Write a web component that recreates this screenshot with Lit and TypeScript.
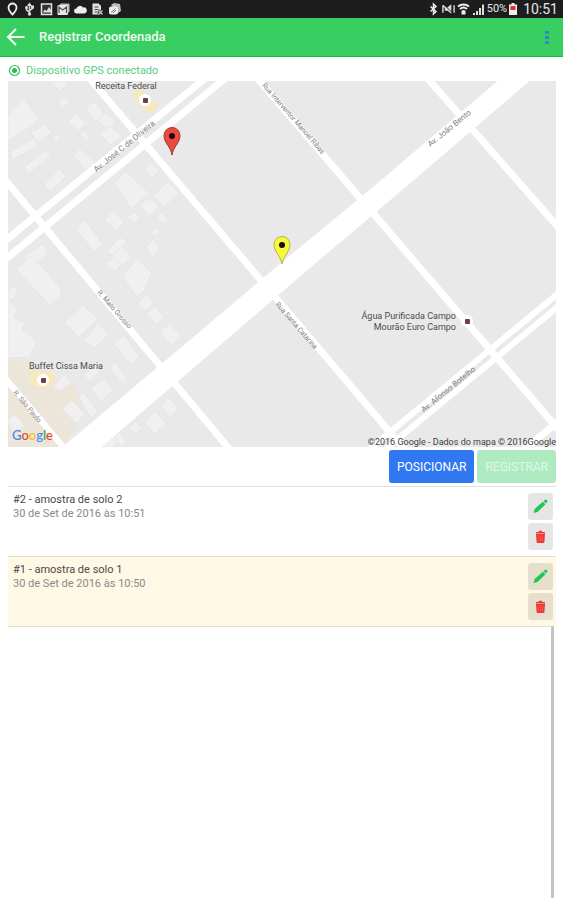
import { LitElement, html, css, svg } from "lit";
import { customElement, property } from "lit/decorators.js";

interface Sample {
  id: number;
  name: string;
  date: string;
  selected: boolean;
}

const samples: Sample[] = [
  { id: 2, name: "amostra de solo 2", date: "30 de Set de 2016 às 10:51", selected: false },
  { id: 1, name: "amostra de solo 1", date: "30 de Set de 2016 às 10:50", selected: true },
];

@customElement("status-bar")
class StatusBar extends LitElement {
  static styles = css`
    :host {
      display: flex;
      justify-content: space-between;
      align-items: center;
      height: 18px;
      padding: 0 5px 0 6px;
      background: #1d1d1d;
      color: #e6e6e6;
      font-family: Roboto, sans-serif;
    }
    .group {
      display: flex;
      align-items: center;
      gap: 3px;
    }
    .left {
      gap: 4px;
    }
    svg {
      display: block;
      width: 13px;
      height: 14px;
    }
    .right {
      gap: 2px;
    }
    .battery {
      width: 8px;
    }
    .percent {
      font-size: 11px;
      line-height: 18px;
    }
    .clock {
      font-size: 14px;
      line-height: 18px;
      margin-left: 4px;
    }
  `;
  render() {
    return html`
      <div class="group left">
        <svg viewBox="0 0 13 14"><path d="M6.500 1.500a4 4 0 0 0-4 4c0 3 4 7 4 7s4-4 4-7a4 4 0 0 0-4-4z" fill="none" stroke="#eee" stroke-width="1.800" /></svg>
        <svg viewBox="0 0 13 14"><path d="M6.500 2v11M6.500 10L3.500 8V5.500M6.500 8.500l3-2V4" fill="none" stroke="#ccc" stroke-width="1.600" /><path d="M4 4l2.500-3.500L9 4z" fill="#ddd" /><circle cx="6.500" cy="12" r="1.700" fill="#ddd" /><circle cx="3.500" cy="5.500" r="1.500" fill="#ddd" /><rect x="8" y="3.500" width="3" height="3" fill="#ddd" /></svg>
        <svg viewBox="0 0 13 14"><rect x="1.500" y="2" width="10" height="10.500" fill="#333" stroke="#e4e4e4" stroke-width="1.500" /><path d="M2.500 10.500l2.500-3 1.500 1.500 2.500-4 2 3v2.500z" fill="#ddd" /></svg>
        <svg viewBox="0 0 13 14"><rect x="3" y="1.500" width="9.500" height="9" rx="1" fill="#bbb" /><rect x="0.500" y="3" width="10.500" height="10" rx="1" fill="#e8e8e8" /><path d="M2 11V5l3.700 3L9.500 5v6" fill="none" stroke="#555" stroke-width="1.300" /></svg>
        <svg viewBox="0 0 13 14"><path d="M2.500 11.500a2.500 2.500 0 0 1 0-5A3.600 3.600 0 0 1 9 5.500a3 3 0 0 1 1.500 6z" fill="#eee" /></svg>
        <svg viewBox="0 0 13 14"><path d="M1.500 1.500h6L10 4v8.500H1.500z" fill="#e4e4e4" /><path d="M3.500 5h4M3.500 7.500h4M3.500 10h3" stroke="#444" /><path d="M7.500 8.500l4 4M11.500 8.500l-4 4" fill="none" stroke="#1d1d1d" stroke-width="3" /><path d="M7.500 8.500l4 4M11.500 8.500l-4 4" fill="none" stroke="#ccc" stroke-width="1.300" /></svg>
        <svg viewBox="0 0 13 14"><path d="M3 3l3-2 6 1 1 7-3 2z" fill="#bdbdbd" /><rect x="1" y="4.500" width="9" height="8" rx="2" fill="#eee" /><path d="M3 10.500l4.500-4M5 11l3-3" stroke="#777" /></svg>
      </div>
      <div class="group right">
        <svg viewBox="0 0 13 14"><path d="M3.500 4.500l5.500 5L6.500 12V2L9 4.500l-5.500 5" fill="none" stroke="#eee" stroke-width="1.500" /></svg>
        <svg viewBox="1 0 14 14"><path d="M2 11V3M2 3l3 3" fill="none" stroke="#ddd" stroke-width="1.500" /><path d="M4 5h3l4-3v10L7 9H4z" fill="#ddd" /><path d="M14 3v8" stroke="#ddd" stroke-width="1.500" /><path d="M3 2l9 9" stroke="#1d1d1d" /></svg>
        <svg viewBox="0 0 13 14"><path d="M1 4.500a8.500 8.500 0 0 1 11 0M3 7a5.500 5.500 0 0 1 7 0" fill="none" stroke="#eee" stroke-width="2" /><path d="M4.500 9a3 3 0 0 1 4 0v3.500h-4z" fill="#eee" /></svg>
        <svg viewBox="0 0 13 14"><path d="M1 13v-2h2v2zM4 13V9h2v4zM7 13V6h2v7zM10 13V2.500h2V13z" fill="#ddd" /></svg>
        <span class="percent">50%</span>
        <svg class="battery" viewBox="0 0 8 14"><path d="M2.500 1h3v1.500H8V13H0V2.500h2.500z" fill="#eee" /><path d="M1.500 4h5v4h-5z" fill="#d33" /></svg>
        <span class="clock">10:51</span>
      </div>
    `;
  }
}

const road = (d: string, w = 7) => svg`<path class="road" d=${d} stroke-width=${w} />`;

const pin = (x: number, y: number, fill: string, stroke: string) => svg`
  <g transform="translate(${x} ${y})">
    <path d="M0 0C-1-8-8-12-8-19.500a8 8 0 0 1 16 0C8-12 1-8 0 0z" fill=${fill} stroke=${stroke} />
    <circle cy="-19" r="3" fill="#1a0c0c" />
  </g>`;

const poi = (x: number, y: number) => svg`
  <circle cx=${x} cy=${y} r="6" fill="#fff" />
  <rect x=${x - 2} y=${y - 2} width="5" height="5" rx="1" fill="#6b4343" />`;

const buildings = [
  "8 115 24 99 38 117 34 125 8 141",
  "50 81 60 91 68 84 66 81",
  "58 103 63 96 70 101 64 108",
  "10 152 33 138 39 146 12 160",
  "31 133 44 124 52 132 38 143",
  "24 167 47 149 51 156 29 174",
  "44 184 59 169 66 176 50 192",
  "53 138 57 133 61 137 56 143",
  "73 155 80 148 97 164 86 171",
  "68 122 76 113 86 123 78 131",
  "85 108 94 101 104 113 96 122",
  "97 120 106 112 116 123 107 130",
  "100 134 110 126 122 137 111 145",
  "79 134 86 130 89 138 86 142",
  "114 183 126 171 149 193 131 209",
  "144 169 151 162 159 171 152 178",
  "152 196 168 182 179 193 165 207",
  "140 205 149 198 159 206 149 217",
  "104 219 113 211 124 222 116 231",
  "127 217 134 212 140 217 134 223",
  "157 218 161 212 168 219 163 224",
  "76 229 85 220 103 244 94 252",
  "150 233 155 227 160 232 155 236",
  "146 247 153 239 159 248 152 258",
  "106 252 121 237 127 242 113 255",
  "109 260 122 247 132 257 118 269",
  "23 256 43 244 48 253 32 268",
  "16 269 30 256 42 266 61 289 61 296 50 306",
  "105 263 115 258 122 265 115 271",
  "122 277 137 259 152 272 144 291 137 297",
  "137 303 147 294 154 304 146 311",
  "146 314 155 306 164 317 157 325",
  "160 333 169 323 181 336 171 345",
  "64 323 83 305 98 319 79 337",
  "84 340 98 323 109 335 94 348",
  "8 290 16 285 18 294 10 301 18 309 14 318 25 323 22 330 37 341 30 357 8 358",
  "114 344 124 335 139 356 132 364 127 360",
  "110 369 115 361 127 378 122 383",
  "84 376 96 364 100 371 90 382",
  "90 388 104 379 114 390 101 402",
  "79 398 83 392 98 412 91 418",
  "62 409 72 400 85 414 77 424",
  "53 387 64 374 71 383 60 391",
  "128 427 136 421 142 429 135 434",
  "144 424 155 411 166 423 155 434",
  "161 406 169 397 178 409 170 417",
  "98 447 112 434 121 440 113 447",
  "113 434 118 430 127 442 121 447",
  "8 420 15 414 25 427 12 432",
];

@customElement("location-map")
class LocationMap extends LitElement {
  static styles = css`
    :host {
      display: block;
      font-family: Roboto, sans-serif;
    }
    svg {
      display: block;
      width: 100%;
      height: auto;
    }
    .land {
      fill: #e9e9e9;
    }
    .building {
      fill: #f0f0f0;
      stroke: #e6e6e6;
    }
    .area {
      fill: #ece6da;
    }
    .spot {
      fill: #f8e8bd;
    }
    .road {
      fill: none;
      stroke: #fff;
    }
    .avenue {
      fill: #fff;
    }
    .street {
      font-size: 7px;
      fill: #808080;
      text-anchor: middle;
    }
    .major {
      font-size: 8px;
    }
    .place {
      font-size: 9px;
      fill: #4c4c4c;
    }
    .centre {
      text-anchor: middle;
    }
    .end {
      text-anchor: end;
    }
    .credit {
      font-size: 9px;
      fill: #404040;
      text-anchor: end;
    }
    .logo {
      font-family: Lato, sans-serif;
      font-size: 13px;
      font-weight: 500;
    }
    .b { fill: #4285f4; }
    .r { fill: #ea4335; }
    .y { fill: #fbbc05; }
    .g { fill: #34a853; }
  `;
  street(x: number, y: number, angle: number, label: string, major = false) {
    return svg`<text class=${major ? "street major" : "street"} transform="translate(${x} ${y}) rotate(${angle})" y="3">${label}</text>`;
  }
  render() {
    return html`
      <svg viewBox="8 81 548 366" role="img" aria-label="Mapa">
        <rect class="land" x="8" y="81" width="548" height="366" />
        <polygon class="area" points="8,360 32,362 50,376 60,384 75,385 84,414 72,434 63,447 8,447" />
        ${buildings.map((p) => svg`<polygon class="building" points=${p} />`)}
        <polygon class="spot" points="28,378 34,371 52,371 56,380 46,388 34,387" />
        <polygon class="spot" points="131,94 140,89 159,106 149,114" />
        ${road("M0 245L213 72M0 264L240 66", 7)}
        ${road("M2 176L236 457", 7)}
        ${road("M85 73L411 457", 7)}
        ${road("M252 72L565 437", 7)}
        ${road("M422 72L566 236", 7)}
        ${road("M360 457L566 287M376 457L566 300", 6)}
        ${road("M524 450L566 415", 7)}
        ${road("M0 372L70 455", 6)}
        <polygon class="avenue" points="60,449 190,340 275,268 373,187 500,79 532,79 381,208 318,261 190,371 99,449" />
        ${this.street(124, 146, -39, "Av. José C de Oliveira", true)}
        ${this.street(294, 118, 49, "Rua Interventor Manoel Ribas")}
        ${this.street(449, 128, -39, "Av. João Bento", true)}
        ${this.street(115, 309, 49, "R. Mato Grosso")}
        ${this.street(297, 325, 49, "Rua Santa Catarina")}
        ${this.street(448, 389, -39, "Av. Afonso Botelho", true)}
        ${this.street(28, 406, 50, "R. São Paulo")}
        ${poi(145, 100)} ${poi(43, 380)} ${poi(467, 321)}
        <text class="place centre" x="126" y="89">Receita Federal</text>
        <text class="place centre" x="66" y="369">Buffet Cissa Maria</text>
        <text class="place end" x="456" y="319">Água Purificada Campo</text>
        <text class="place end" x="456" y="330">Mourão Euro Campo</text>
        ${pin(172, 155, "#ea4a3e", "#a8342c")}
        ${pin(282, 264, "#f8f83e", "#b4b43c")}
        <text class="logo" x="12" y="440"><tspan class="b">G</tspan><tspan class="r">o</tspan><tspan class="y">o</tspan><tspan class="b">g</tspan><tspan class="g">l</tspan><tspan class="r">e</tspan></text>
        <text class="credit" x="556" y="445">©2016 Google - Dados do mapa © 2016Google</text>
      </svg>
    `;
  }
}

@customElement("sample-row")
class SampleRow extends LitElement {
  @property({ attribute: false }) sample!: Sample;
  static styles = css`
    :host {
      display: block;
      font-family: Roboto, sans-serif;
    }
    .row {
      display: flex;
      justify-content: space-between;
      box-sizing: border-box;
      min-height: 70px;
      padding: 6px 3px 5px 5px;
      border-top: 1px solid #dfdfdf;
      background: #fff;
    }
    .selected {
      background: #fef8e5;
      border-color: #e4dfcc;
    }
    .name,
    .date {
      margin: 0;
      font-size: 11px;
      line-height: 14px;
      font-weight: 400;
      color: #4a4a4a;
    }
    .date {
      color: #8a8a8a;
    }
    .actions {
      display: flex;
      flex-direction: column;
      gap: 3px;
    }
    button {
      display: flex;
      align-items: center;
      justify-content: center;
      width: 25px;
      height: 27px;
      padding: 0;
      border: 0;
      border-radius: 3px;
      background: #e6e6e6;
    }
    .selected button {
      background: #e5dfce;
    }
    svg {
      display: block;
      width: 15px;
      height: 15px;
    }
  `;
  render() {
    const s = this.sample;
    return html`
      <div class="row ${s.selected ? "selected" : ""}">
        <div>
          <h2 class="name">#${s.id} - ${s.name}</h2>
          <p class="date">${s.date}</p>
        </div>
        <div class="actions">
          <button aria-label="Editar">
            <svg viewBox="0 0 15 15"><path d="M0.500 14l1.200-4L9.800 2.800l2.700 2.500L4.500 13zM10.500 2.200l1.500-1.400q.8-.6 1.600.1l.6.600q.6.800-.1 1.500l-1.300 1.500z" fill="#20c556" /></svg>
          </button>
          <button aria-label="Excluir">
            <svg viewBox="0 0 15 15"><path d="M3 3h2.500q.3-1.500 2-1.500t2 1.500H12v1.500H3z" fill="#ee3a36" /><path d="M3 5h9l-.6 8q-.1 1-1 1H4.600q-.9 0-1-1z" fill="#ee3a36" /><path d="M5.700 6.500v5.500M7.500 6.500v5.500M9.300 6.500v5.500" stroke="#f4736c" stroke-width="0.500" /></svg>
          </button>
        </div>
      </div>
    `;
  }
}

@customElement("app-root")
class AppRoot extends LitElement {
  static styles = css`
    :host {
      display: flex;
      flex-direction: column;
      min-height: 100vh;
      background: #fff;
      font-family: Roboto, sans-serif;
    }
    header {
      display: flex;
      align-items: center;
      box-sizing: border-box;
      height: 39px;
      padding: 0 8px 0 6px;
      border-bottom: 1px solid #14bd4b;
      background: #38ce62;
    }
    h1 {
      flex: 1;
      margin: 0 0 0 14px;
      font-size: 13px;
      line-height: 18px;
      font-weight: 500;
      color: #effbf2;
    }
    .icon {
      padding: 0;
      border: 0;
      background: none;
    }
    .icon svg {
      display: block;
    }
    main {
      display: flex;
      flex: 1;
      flex-direction: column;
      padding: 0 7px 2px 8px;
    }
    .gps {
      display: flex;
      align-items: center;
      gap: 5px;
      height: 24px;
      padding-top: 3px;
      box-sizing: border-box;
      font-size: 11px;
      color: #5bcd7b;
    }
    .buttons {
      display: flex;
      justify-content: flex-end;
      gap: 3px;
      padding: 3px 0;
    }
    .buttons button {
      height: 33px;
      padding: 0 8px;
      border: 0;
      border-radius: 3px;
      font-family: inherit;
      font-size: 12px;
      font-weight: 400;
      color: #fff;
      background: #2f78f2;
    }
    .buttons button:disabled {
      color: #dff8e6;
      background: #aeebc0;
    }
    .rest {
      flex: 1;
      margin-right: 2px;
      border-top: 1px solid #e4dfcc;
      border-right: 3px solid #c4c4c4;
    }
  `;
  render() {
    return html`
      <status-bar></status-bar>
      <header>
        <button class="icon" aria-label="Voltar">
          <svg width="19" height="20" viewBox="0 0 19 20"><path d="M10 2L2 10l8 8M2 10h16.500" fill="none" stroke="#f4fff6" stroke-width="2" /></svg>
        </button>
        <h1>Registrar Coordenada</h1>
        <button class="icon" aria-label="Mais opções">
          <svg width="16" height="16" viewBox="0 0 16 16"><path d="M6 2h4v3H6zM6 7h4v3H6zM6 12h4v3H6z" fill="#2b8cc4" /></svg>
        </button>
      </header>
      <main>
        <div class="gps">
          <svg width="13" height="13" viewBox="0 0 13 13"><circle cx="6.500" cy="6.500" r="5" fill="none" stroke="#36c55e" stroke-width="1.200" /><circle cx="6.500" cy="6.500" r="2.500" fill="#28bd52" /></svg>
          <span>Dispositivo GPS conectado</span>
        </div>
        <location-map></location-map>
        <div class="buttons">
          <button>POSICIONAR</button>
          <button disabled>REGISTRAR</button>
        </div>
        ${samples.map((s) => html`<sample-row .sample=${s}></sample-row>`)}
        <div class="rest"></div>
      </main>
    `;
  }
}
